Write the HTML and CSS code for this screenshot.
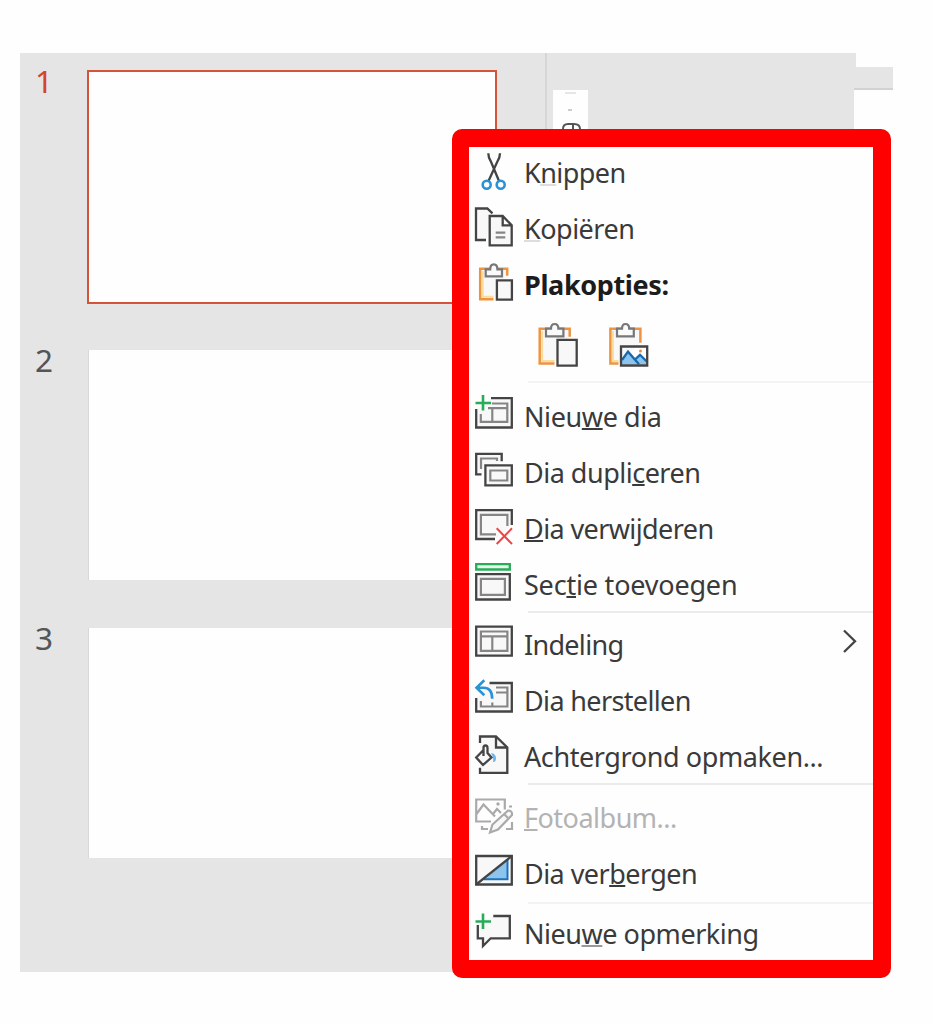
FILE: index.html
```html
<!DOCTYPE html>
<html lang="nl">
<head>
<meta charset="utf-8">
<title>Dia's</title>
<link rel="stylesheet" href="styles.css">
</head>
<body>
<main class="app">
  <section class="thumbs">
    <div class="thumb selected"><span class="num">1</span><div class="slide"></div></div>
    <div class="thumb"><span class="num">2</span><div class="slide"></div></div>
    <div class="thumb"><span class="num">3</span><div class="slide"></div></div>
  </section>
  <section class="editor">
    <div class="tool">
      <svg width="35" height="60" viewBox="0 0 35 60"><path d="M12 3h11" stroke="#e6e6e6" stroke-width="2"/><path d="M15 20h4" stroke="#ccc" stroke-width="2"/><path d="M10 44v-5q0-5 5-5h6q6 0 6 5v5M20 35v9" fill="none" stroke="#555" stroke-width="2"/></svg>
    </div>
    <div class="edge"><div class="edge-top"></div><div class="edge-bar"></div><div class="edge-page"></div></div>
  </section>
</main>

<nav class="menu">
  <div class="item"><svg class="icon" viewBox="0 0 40 52"><path d="M14.3 6.3q0 4 2.500 8L25 34M26 6.300q0 4-2.500 8L14.500 34" class="dark"/><g class="blue"><circle cx="12.7" cy="37.7" r="4"/><circle cx="26.7" cy="37.7" r="4"/></g></svg><span class="label w1">K<u class="faint">n</u>ippen</span></div>
  <div class="item"><svg class="icon" viewBox="0 0 40 52"><path d="M12 37H2V5.500h11.300l5.200 4.800" class="dark page"/><path d="M15.700 13h13l9 9.300v20h-22zM28.700 13v9.300h9" class="dark page"/><path d="M21.700 29.700h9.600M21.700 34.300h9.600" class="gray"/></svg><span class="label w2"><u class="faint">K</u>opiëren</span></div>
  <div class="item"><svg class="icon" viewBox="0 0 40 52"><path d="M19.500 40.300H6.200V9.800h27v7" class="orange"/><path d="M19.500 37.800H8.700V12" class="cream"/><path d="M11.700 17.300V10.300h4.500q0-5 3.600-5t3.600 5H28v7z" class="clip"/><path d="M22.900 21.300h15v19.300h-15z" class="dark page"/></svg><span class="label bold w3">Plakopties:</span></div>

  <div class="paste">
    <svg class="big" viewBox="0 0 44 50"><path d="M18.500 43.500H3.700V8.700h30v8" class="orange"/><path d="M18.500 41H6.200V11" class="cream"/><path d="M10 16.300V8.700h5q0-4.700 3.700-4.700t3.700 4.700h5v7.600z" class="clip"/><path d="M21.500 19.900h19.200v25.800H21.500z" class="dark page"/></svg>
    <svg class="big" viewBox="0 0 44 50"><path d="M12.500 43.500H4.400V8.700h30v14" class="orange"/><path d="M12.500 41H6.900V11" class="cream"/><path d="M11 16.300V8.700h5q0-4.700 3.600-4.700t3.600 4.700h4.600v7.600z" class="clip"/><path d="M16 41l6-9 7 7 5-4 6.300 6v3.500H16z" fill="#8cc4ee"/><path d="M16 40l6-8.300 11 12.500M29 39.500l5-4.700 6.500 6.500" fill="none" stroke="#1769ad" stroke-width="2.300"/><circle cx="34.500" cy="31" r="1.500" fill="#ee8b3c"/><path d="M15 26.500h26.200v19H15z" class="dark"/></svg>
  </div>
  <hr class="sep first">

  <div class="item"><svg class="icon" viewBox="0 0 40 52"><path d="M17 7.200h20.800v29.300H2.200V18" class="dark page"/><path d="M18 12.500h15.300v18.300H6.800V23M14 17.200h19M18.300 17.200v13.500" class="gray"/><path d="M9 4v15.500M1.500 12h15.500" class="green"/></svg><span class="label w4">Nieu<u>w</u>e dia</span></div>
  <div class="item"><svg class="icon" viewBox="0 0 40 52"><path d="M7.500 27.300H2.200V6.800h25.500v7.500" class="dark page"/><path d="M7 22v-10.500h16V14" class="gray"/><path d="M11.400 18.400h26.400v20H11.400z" class="dark page"/><path d="M16.300 23.500h17v10h-17z" class="gray"/></svg><span class="label w5">Dia dupli<u>c</u>eren</span></div>
  <div class="item"><svg class="icon" viewBox="0 0 40 52"><path d="M21 36H2.200V7.200h35.600V22" class="dark page"/><path d="M22 31.300H6.900V11.900h26.500V23" class="gray"/><path d="M22.700 25.300L38 41M38 25.300L22.700 41" class="red"/></svg><span class="label w6"><u>D</u>ia verwijderen</span></div>
  <div class="item"><svg class="icon" viewBox="0 0 40 52"><path d="M2.200 5.200h33.600v5.300H2.200z" fill="#e5f5ea" stroke="#27ad58" stroke-width="2.300"/><path d="M2.200 15.200h33.600v25.300H2.200z" class="dark page"/><path d="M6.900 19.900h24v16h-24z" class="gray"/></svg><span class="label w7">Sec<u>t</u>ie toevoegen</span></div>
  <hr class="sep">

  <div class="item"><svg class="icon" viewBox="0 0 40 52"><path d="M2.200 7.700h35.600v29H2.200z" class="dark page"/><path d="M6.900 12.500h26.500v19.300H6.900zM7 17.300h26M18.300 17.300v14.500" class="gray"/></svg><span class="label w8">Indeling</span><svg class="chev" viewBox="0 0 16 26"><path d="M2 2.500L13 13.200 2 24" class="dark"/></svg></div>
  <div class="item"><svg class="icon" viewBox="0 0 40 52"><path d="M15.500 8h22.300v28.500H2.200V23" class="dark page"/><path d="M22 12.500h11.400v19H6.900V26M22 17.500h11M18.300 27.500v4" class="gray"/><path d="M10.300 5.300L2.500 12.700l7.800 7.600M2.500 12.700h7q8.700 0 8.700 11" class="blue"/></svg><span class="label w9">Dia herstellen</span></div>
  <div class="item"><svg class="icon" viewBox="0 0 40 52"><path d="M6 12V5.500h16l11.300 11V41.800H6v-5" class="dark page"/><path d="M22 5.500v11h11" class="dark"/><path d="M9.500 19v-2q0-2.500 2-2.500t2 2.500v5l4 4.500-8.500 7.500L2.200 26.500 9.500 19v6" class="dark page"/><path d="M17 22q5 .5 5 5.500 0 3.500-3 3.500 1-4-2-9z" fill="#6db5ee"/></svg><span class="label w10">Achtergrond opmaken...</span></div>
  <hr class="sep low">

  <div class="item off"><svg class="icon" viewBox="0 0 40 52"><path d="M17 29.500H2.200V7.500h28.600v10M2.500 22l7-9.500 11.500 12M19 22l4-5 4 4" class="pale"/><circle cx="24" cy="12" r="1.700" fill="#aaa"/><path d="M8 34v3h6M35 14.500h3M32 37h6v-7" class="pale"/><path d="M16 40.500l2.500-8L34 18.500q4.500 0 4 4.500L24 37.500z" class="pale page"/><path d="M30 22l4 4" class="pale"/></svg><span class="label w11"><u>F</u>otoalbum...</span></div>
  <div class="item"><svg class="icon" viewBox="0 0 40 52"><path d="M2.200 8h35.600v28.500H2.200z" class="dark page"/><path d="M11 31.500h22.500V11z" fill="#8cc4ee"/><path d="M10 31.300h23.500V12" fill="none" stroke="#1b73bb" stroke-width="2"/><path d="M2.200 36.500L37.800 8" class="dark"/></svg><span class="label w12">Dia ver<u>b</u>ergen</span></div>
  <hr class="sep last">

  <div class="item"><svg class="icon" viewBox="0 0 40 52"><path d="M19.300 8H35.800v22.300H16.700L9 38v-7.700H3.800V17" class="dark page"/><path d="M9 5.500v15.500M1.500 13.500h15.500" class="green"/></svg><span class="label w13">Nieu<u class="mid">w</u>e opmerking</span></div>
</nav>
</body>
</html>
```
FILE: styles.css
```css
* { box-sizing: border-box; }

body {
  margin: 0;
  width: 933px;
  height: 1024px;
  padding: 53px 40px 52px 20px;
  background: #fefefe;
  font-family: "Noto Sans", "Open Sans", sans-serif;
  overflow: hidden;
}

.app { display: flex; width: 873px; height: 919px; background: #e5e5e5; }

.thumbs {
  width: 527px;
  padding: 18px 0 0 15px;
  border-right: 2px solid #d6d6d6;
  display: flex;
  flex-direction: column;
  gap: 48.500px;
}
.thumb { display: flex; height: 230px; }
.num {
  width: 53px;
  margin-top: -2px;
  font-size: 31.500px;
  line-height: 24px;
  color: #555;
}
.slide { width: 408px; background: #fefefe; border-left: 1px solid #d8d8d8; }
.selected .num { color: #d24726; }
.selected .slide {
  width: 410px;
  height: 234px;
  margin: -1px 0 0 -1px;
  border: 2.500px solid #d4543a;
}

.editor { flex: 1; display: flex; justify-content: space-between; }
.tool { width: 35px; height: 60px; margin: 37px 0 0 6px; background: #fefefe; }
.tool svg { display: block; }
.edge { width: 39px; display: flex; flex-direction: column; }
.edge-top { height: 14px; margin-left: 2px; background: #fefefe; }
.edge-bar { height: 23px; border-bottom: 2px solid #d2d2d2; }
.edge-page { flex: 1; background: #fefefe; }

.menu {
  position: absolute;
  left: 452px;
  top: 129px;
  width: 439px;
  height: 849px;
  border: solid #f00;
  border-width: 18px 18px 18px 17px;
  border-radius: 10px;
  background: #fefefe;
}

.item {
  display: flex;
  height: 52px;
  margin-bottom: 4px;
  padding-left: 5px;
}
.icon { width: 40px; height: 52px; flex: none; }
.label {
  margin-left: 10px;
  font-size: 27px;
  line-height: 52px;
  white-space: nowrap;
  color: #3a3a3a;
}
.bold { font-weight: 700; color: #1c1c1c; }
.off .label { color: #b3b3b3; }
.label u {
  text-decoration-thickness: 1.500px;
  text-underline-offset: 1px;
  text-decoration-skip-ink: none;
}
.label .faint { text-decoration-color: #ddd; }
.label .mid { text-decoration-color: #999; }

/* Per-label tracking */
.w1 { letter-spacing: -0.570px; }
.w2 { letter-spacing: -0.500px; }
.w3 { letter-spacing: -0.360px; }
.w4 { letter-spacing: -0.400px; }
.w5 { letter-spacing: -0.500px; }
.w6 { letter-spacing: -0.600px; }
.w7 { letter-spacing: -0.200px; }
.w8 { letter-spacing: -0.700px; }
.w9 { letter-spacing: -0.640px; }
.w10 { letter-spacing: -0.400px; }
.w11 { letter-spacing: -0.500px; }
.w12 { letter-spacing: -0.540px; }
.w13 { letter-spacing: -0.470px; }

.chev { width: 16px; height: 26px; margin: 9px 15px 0 auto; }

.paste { display: flex; gap: 26px; height: 60px; margin-bottom: 4px; padding: 5px 0 0 67px; }
.big { width: 44px; height: 50px; }

.sep { height: 2px; margin: -4px 0 6px 59px; border: 0; background: #ebebeb; }
.sep.first { margin: 6px 0 8px 59px; background: #f3f3f3; }
.sep.low { margin-bottom: 7px; }
.sep.last { margin: -2px 0 4px 59px; background: #f3f3f3; }

.dark { fill: none; stroke: #444; stroke-width: 2.300; }
.gray { fill: none; stroke: #858585; stroke-width: 2.200; }
.pale { fill: none; stroke: #aaa; stroke-width: 2.200; }
.page { fill: #f8f8f8; }
.blue { fill: none; stroke: #2a92d6; stroke-width: 2.600; }
.green { fill: none; stroke: #27ad58; stroke-width: 2.600; }
.red { fill: none; stroke: #f04444; stroke-width: 2; }
.orange { fill: #f8f8f8; stroke: #ee9440; stroke-width: 2.500; }
.cream { fill: none; stroke: #fbdc9a; stroke-width: 2; }
.clip { fill: #fafafa; stroke: #777; stroke-width: 2.200; }
```
